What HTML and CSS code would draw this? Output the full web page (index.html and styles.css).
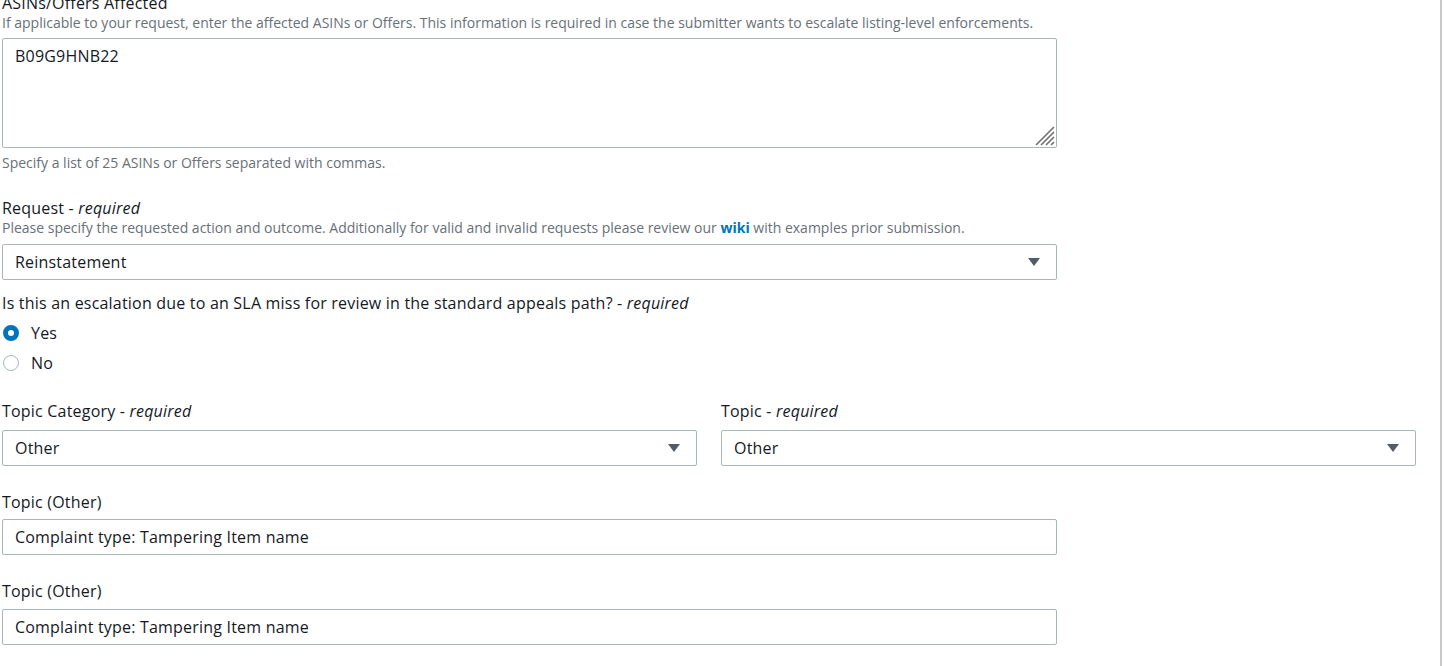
FILE: index.html
```html
<!DOCTYPE html>
<html lang="en">
<head>
<meta charset="utf-8">
<title>Escalation request</title>
<link rel="stylesheet" href="styles.css">
</head>
<body>
<div class="page">
  <form class="form">
    <div class="field">
      <label class="label">ASINs/Offers Affected</label>
      <p class="desc">If applicable to your request, enter the affected ASINs or Offers. This information is required in case the submitter wants to escalate listing-level enforcements.</p>
      <div class="textarea-wrap">
        <textarea class="control textarea">B09G9HNB22</textarea>
        <svg class="grip" width="22" height="22" viewBox="0 0 22 22" aria-hidden="true">
          <path d="M3 21L21 3M8 21L21 8M13 21L21 13M18 21L21 18"/>
        </svg>
      </div>
      <p class="hint">Specify a list of 25 ASINs or Offers separated with commas.</p>
    </div>

    <div class="field">
      <label class="label">Request - <em>required</em></label>
      <p class="desc desc-gap">Please specify the requested action and outcome. Additionally for valid and invalid requests please review our <a class="link" href="#">wiki</a> with examples prior submission.</p>
      <div class="control select">
        <span>Reinstatement</span>
        <svg class="caret" width="12" height="8" viewBox="0 0 12 8"><path d="M0 0h12L6 8z"/></svg>
      </div>
    </div>

    <div class="field field-tight">
      <label class="label">Is this an escalation due to an SLA miss for review in the standard appeals path? - <em>required</em></label>
      <div class="radios">
        <label class="radio"><span class="dot dot-on"></span>Yes</label>
        <label class="radio"><span class="dot"></span>No</label>
      </div>
    </div>

    <div class="field cols">
      <div class="col">
        <label class="label">Topic Category - <em>required</em></label>
        <div class="control select">
          <span>Other</span>
          <svg class="caret" width="12" height="8" viewBox="0 0 12 8"><path d="M0 0h12L6 8z"/></svg>
        </div>
      </div>
      <div class="col">
        <label class="label">Topic - <em>required</em></label>
        <div class="control select">
          <span>Other</span>
          <svg class="caret" width="12" height="8" viewBox="0 0 12 8"><path d="M0 0h12L6 8z"/></svg>
        </div>
      </div>
    </div>

    <div class="field">
      <label class="label">Topic (Other)</label>
      <div class="control input">Complaint type: Tampering Item name</div>
    </div>

    <div class="field">
      <label class="label">Topic (Other)</label>
      <div class="control input input-last">Complaint type: Tampering Item name</div>
    </div>
  </form>
</div>
</body>
</html>
```

FILE: styles.css
```css
html, body {
  margin: 0;
  padding: 0;
  background: #ffffff;
  overflow: hidden;
}

body {
  font-family: "Open Sans", "Noto Sans", Arial, sans-serif;
  color: #16191f;
  font-size: 16px;
}

.page {
  width: 1442px;
  height: 100vh;
  overflow: hidden;
  border-right: 2px solid #c9c9c9;
  background: #ffffff;
  box-sizing: border-box;
}

.form {
  margin-top: -8px;
  padding-left: 2px;
  width: 1414px;
  letter-spacing: 0.2px;
}

.field {
  margin-bottom: 25px;
}

.field-tight {
  margin-top: -13px;
  margin-bottom: 22px;
}

.label {
  display: block;
  font-size: 16px;
  line-height: 22px;
  color: #16191f;
}

.label em {
  font-style: italic;
}

.desc,
.hint {
  margin: 0;
  font-size: 14px;
  line-height: 18px;
  letter-spacing: 0;
  color: #687078;
}

.desc {
  margin-bottom: 6px;
}

.desc-gap {
  margin-bottom: 7px;
}

.hint {
  margin-top: 6px;
}

.link {
  color: #0073bb;
  font-weight: 700;
  text-decoration: none;
}

.control {
  box-sizing: border-box;
  width: 1055px;
  border: 1px solid #aab7b8;
  border-radius: 2px;
  background: #fff;
  font-family: inherit;
  font-size: 16px;
  letter-spacing: 0.2px;
  color: #16191f;
}

.textarea-wrap {
  position: relative;
  width: 1055px;
  margin-top: 1px;
}

.textarea {
  display: block;
  height: 110px;
  padding: 6px 12px;
  line-height: 22px;
  resize: none;
  margin: 0;
}

/* resize grip drawn over the textarea's bottom-right corner */
.grip {
  position: absolute;
  right: 2px;
  bottom: 2px;
  stroke: #6f6f6f;
  stroke-width: 1.6;
  fill: none;
}

.select,
.input {
  height: 36px;
  padding: 0 16px 0 12px;
  display: flex;
  align-items: center;
  justify-content: space-between;
  line-height: 22px;
}

.label + .select {
  margin-top: 7px;
}

.label + .input {
  margin-top: 6px;
}

.input-last {
  margin-top: 7px !important;
}

.caret {
  fill: #545b64;
  display: block;
}

.radios {
  display: flex;
  flex-direction: column;
  margin-top: 4px;
}

.radio {
  display: flex;
  align-items: center;
  height: 30px;
  gap: 12px;
  padding-left: 1px;
  line-height: 22px;
}

.dot {
  box-sizing: border-box;
  width: 16px;
  height: 16px;
  border-radius: 50%;
  border: 1px solid #aab7b8;
  background: #fff;
}

.dot-on {
  border: 5px solid #0073bb;
}

.cols {
  display: grid;
  grid-template-columns: 695px 695px;
  column-gap: 24px;
}

.cols .control {
  width: 695px;
}

.cols .label + .select {
  margin-top: 8px;
}
```
